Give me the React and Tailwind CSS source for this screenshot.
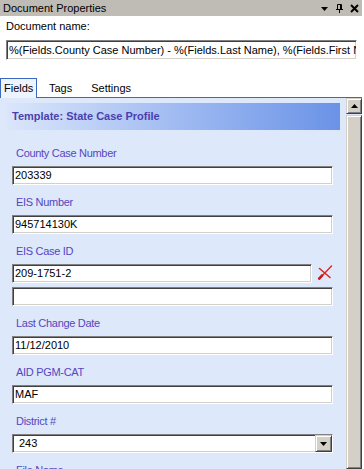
import React from "react";

const sunken =
  "border border-t-[#808080] border-l-[#808080] border-b-white border-r-white shadow-[inset_1px_1px_0_#404040,inset_-1px_-1px_0_#d4d0c8] bg-white";
const raised =
  "bg-[#d4d0c8] border border-t-[#d4d0c8] border-l-[#d4d0c8] border-b-[#404040] border-r-[#404040] shadow-[inset_1px_1px_0_#ffffff,inset_-1px_-1px_0_#808080]";

function Input({ value, w = "w-[321px]" }) {
  return (
    <div className={`${sunken} ${w} h-[19px] flex items-center pl-[2px] text-[11px] leading-[13px] text-black`}>
      {value}
    </div>
  );
}

function Label({ children }) {
  return <div className="h-[13px] ml-[4px] mb-[6px] text-[11px] leading-[13px] tracking-[-0.3px] text-[#5546c0]">{children}</div>;
}

function RedX() {
  return (
    <svg width="16" height="15" viewBox="0 0 16 15">
      <path d="M2.5 3.5 L13 12.5" stroke="#e4231b" strokeWidth="1.6" strokeLinecap="round" fill="none" />
      <path d="M14.5 1 L3 13" stroke="#e4231b" strokeWidth="1.4" strokeLinecap="round" fill="none" />
      <path d="M5 10.5 L2.2 13.6" stroke="#d01810" strokeWidth="2.6" strokeLinecap="round" fill="none" />
    </svg>
  );
}

export default function App() {
  return (
    <div className="w-[364px] h-[469px] overflow-hidden bg-white" style={{ fontFamily: '"Liberation Sans", Arial, sans-serif' }}>
      <div className="w-[362px] h-[469px] flex flex-col">
        {/* title bar */}
        <div className="h-[16px] bg-[#bfbcb6] flex items-center justify-between pl-[3px] pr-[3px] shrink-0">
          <span className="text-[11px] leading-[13px] text-black">Document Properties</span>
          <div className="flex items-center gap-[6px]">
            <svg width="8" height="5" viewBox="0 0 8 5" className="mt-[3px]">
              <path d="M0 0 H7 L3.5 4 Z" fill="#000" />
            </svg>
            <svg width="9" height="9" viewBox="0 0 9 9">
              <path d="M2.5 0.5 H6.5 V5" stroke="#000" fill="none" />
              <path d="M5.5 0.5 V5" stroke="#000" fill="none" />
              <path d="M1 5.5 H8" stroke="#000" fill="none" />
              <path d="M4.5 5.5 V9" stroke="#000" fill="none" />
              <path d="M2.5 0.5 V5" stroke="#000" fill="none" />
            </svg>
            <svg width="9" height="9" viewBox="0 0 9 9">
              <path d="M1 1 L8 8 M8 1 L1 8" stroke="#000" strokeWidth="2" fill="none" />
            </svg>
          </div>
        </div>

        {/* document name */}
        <div className="pl-[6px] pt-[4px] shrink-0">
          <div className="h-[13px] text-[11px] leading-[13px] text-black">Document name:</div>
          <div className={`${sunken} mt-[7px] w-[351px] h-[20px] flex items-center pl-[2px] text-[11px] leading-[13px] text-black whitespace-nowrap overflow-hidden`}>
            %(Fields.County Case Number) - %(Fields.Last Name), %(Fields.First Name)
          </div>
        </div>

        {/* tabs */}
        <div className="mt-[18px] h-[20px] flex items-end shrink-0 relative">
          <div className="absolute left-0 right-0 bottom-0 h-[1px] bg-[#3b68c0]" />
          <div className="relative z-10 w-[37px] h-[20px] bg-[#eef4fd] border border-b-0 border-[#3b68c0] flex items-center pl-[3px] text-[11px] leading-[13px] text-black">
            Fields
          </div>
          <div className="h-[20px] flex items-center pl-[12px] text-[11px] leading-[13px] text-black">Tags</div>
          <div className="h-[20px] flex items-center pl-[19px] text-[11px] leading-[13px] text-black">Settings</div>
        </div>

        {/* content */}
        <div className="flex-1 flex bg-[#dde8fb] overflow-hidden">
          <div className="flex-1 flex flex-col pt-[5px] overflow-hidden">
            <div className="ml-[6px] w-[334px] h-[27px] flex items-center pl-[6px] bg-gradient-to-r from-[#dbe6fb] via-[#a2bcf2] to-[#6a92e6] shrink-0">
              <span className="text-[11px] leading-[13px] font-bold text-[#4a3fae]">Template: State Case Profile</span>
            </div>

            <div className="pl-[12px] pt-[17px] flex flex-col">
              <Label>County Case Number</Label>
              <Input value="203339" />

              <div className="mt-[11px]">
                <Label>EIS Number</Label>
                <Input value="945714130K" />
              </div>

              <div className="mt-[11px]">
                <Label>EIS Case ID</Label>
                <div className="flex items-center">
                  <Input value="209-1751-2" w="w-[300px]" />
                  <div className="ml-[5px] -mt-[3px]">
                    <RedX />
                  </div>
                </div>
                <div className="mt-[4px]">
                  <Input value="" />
                </div>
              </div>

              <div className="mt-[11px]">
                <Label>Last Change Date</Label>
                <Input value="11/12/2010" />
              </div>

              <div className="mt-[11px]">
                <Label>AID PGM-CAT</Label>
                <Input value="MAF" />
              </div>

              <div className="mt-[11px]">
                <Label>District #</Label>
                <div className={`${sunken} w-[321px] h-[19px] flex items-center justify-between text-[11px] leading-[13px] text-black`}>
                  <span className="pl-[6px]">243</span>
                  <div className={`${raised} w-[17px] h-[17px] flex items-center justify-center`}>
                    <svg width="7" height="4" viewBox="0 0 7 4">
                      <path d="M0 0 H7 L3.5 4 Z" fill="#000" />
                    </svg>
                  </div>
                </div>
              </div>

              <div className="mt-[11px]">
                <Label>File Name</Label>
              </div>
            </div>
          </div>

          {/* scrollbar */}
          <div className="w-[16px] flex flex-col shrink-0">
            <div className={`${raised} h-[16px] flex items-center justify-center`}>
              <svg width="7" height="4" viewBox="0 0 7 4">
                <path d="M0 4 H7 L3.5 0 Z" fill="#000" />
              </svg>
            </div>
            <div className="h-[1px]" />
            <div className={`${raised} flex-1`} />
          </div>
        </div>
      </div>
    </div>
  );
}
